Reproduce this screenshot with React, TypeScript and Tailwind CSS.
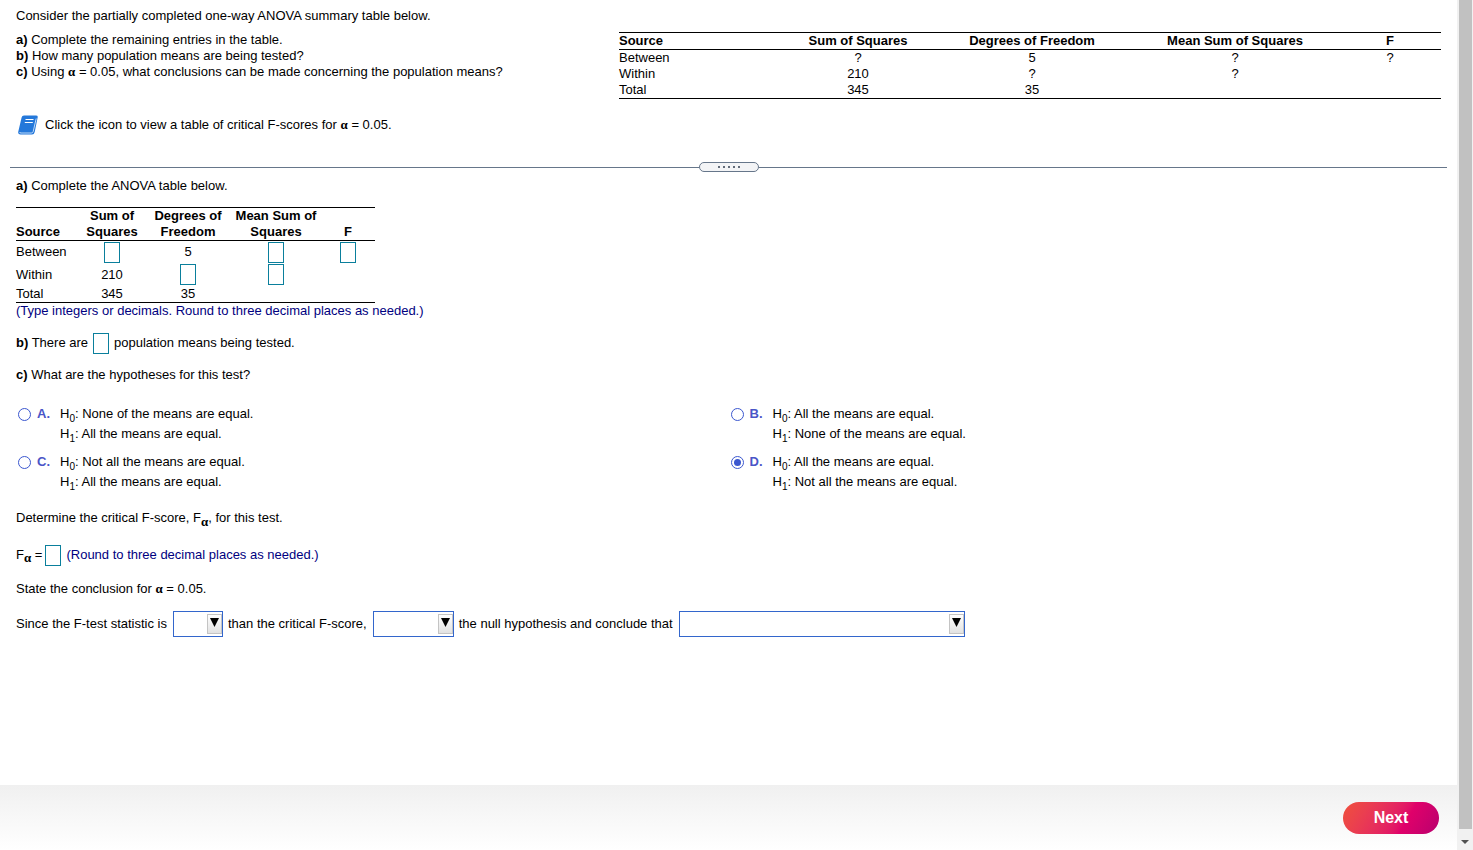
import { useState } from "react";
import type { ReactNode } from "react";

function Alpha() {
  return <span className="font-['Liberation_Serif',serif] text-[13px] leading-none font-bold">α</span>;
}

function Blank({ label }: { label: string }) {
  return (
    <input
      type="text"
      aria-label={label}
      className="inline-block h-[21px] w-4 border border-[#0a7f9c] bg-white text-center align-middle outline-none focus:bg-cyan-50"
    />
  );
}

function Dropdown({ label, options, className }: { label: string; options: string[]; className: string }) {
  return (
    <span className={`relative mr-[5px] ml-[6px] inline-flex h-[26px] ${className}`}>
      <select
        aria-label={label}
        defaultValue=""
        className="h-full w-full appearance-none border border-[#3366cc] bg-white pl-1 outline-none"
      >
        <option value=""></option>
        {options.map((option) => (
          <option key={option}>{option}</option>
        ))}
      </select>
      <span className="pointer-events-none absolute top-[3px] right-px flex h-5 w-[15px] justify-center border border-[#c4c4c4] bg-gradient-to-b from-white to-[#e2e2e2] pt-[3px]">
        <svg viewBox="0 0 9 9" className="h-[9px] w-[9px]" aria-hidden="true">
          <path d="M0 0h9L4.5 9z" fill="#000" />
        </svg>
      </span>
    </span>
  );
}

const summaryRows = [
  ["Between", "?", "5", "?", "?"],
  ["Within", "210", "?", "?", ""],
  ["Total", "345", "35", "", ""],
];

function SummaryTable() {
  return (
    <table className="mt-6 w-full table-fixed border-collapse self-start border-y border-black">
      <colgroup>
        <col className="w-[164px]" />
        <col className="w-[150px]" />
        <col className="w-[198px]" />
        <col className="w-[208px]" />
        <col className="w-[102px]" />
      </colgroup>
      <thead>
        <tr className="border-b border-black">
          <th className="p-0 text-left">Source</th>
          <th className="p-0">Sum of Squares</th>
          <th className="p-0">Degrees of Freedom</th>
          <th className="p-0">Mean Sum of Squares</th>
          <th className="p-0">F</th>
        </tr>
      </thead>
      <tbody>
        {summaryRows.map(([source, ...values]) => (
          <tr key={source}>
            <td className="p-0">{source}</td>
            {values.map((value, i) => (
              <td key={i} className="p-0 text-center">
                {value}
              </td>
            ))}
          </tr>
        ))}
      </tbody>
    </table>
  );
}

function AnswerTable() {
  return (
    <table className="w-[359px] table-fixed border-collapse border-y border-black text-center">
      <colgroup>
        <col className="w-[63px]" />
        <col className="w-[66px]" />
        <col className="w-[86px]" />
        <col className="w-[90px]" />
        <col className="w-[54px]" />
      </colgroup>
      <thead>
        <tr className="border-b border-black align-bottom">
          <th className="p-0 text-left">Source</th>
          <th className="p-0">Sum of<br />Squares</th>
          <th className="p-0">Degrees of<br />Freedom</th>
          <th className="p-0">Mean Sum of<br />Squares</th>
          <th className="p-0">F</th>
        </tr>
      </thead>
      <tbody>
        <tr className="h-[23px]">
          <td className="p-0 text-left">Between</td>
          <td className="p-0"><Blank label="Between sum of squares" /></td>
          <td className="p-0">5</td>
          <td className="p-0"><Blank label="Between mean sum of squares" /></td>
          <td className="p-0"><Blank label="F" /></td>
        </tr>
        <tr className="h-[22px]">
          <td className="p-0 text-left">Within</td>
          <td className="p-0">210</td>
          <td className="p-0"><Blank label="Within degrees of freedom" /></td>
          <td className="p-0"><Blank label="Within mean sum of squares" /></td>
          <td className="p-0"></td>
        </tr>
        <tr>
          <td className="p-0 text-left">Total</td>
          <td className="p-0">345</td>
          <td className="p-0">35</td>
          <td className="p-0"></td>
          <td className="p-0"></td>
        </tr>
      </tbody>
    </table>
  );
}

const choices = [
  { letter: "A", h0: "None of the means are equal.", h1: "All the means are equal." },
  { letter: "B", h0: "All the means are equal.", h1: "None of the means are equal." },
  { letter: "C", h0: "Not all the means are equal.", h1: "All the means are equal." },
  { letter: "D", h0: "All the means are equal.", h1: "Not all the means are equal." },
];

function Hypothesis({ index, children }: { index: number; children: ReactNode }) {
  return (
    <span className="block h-5 leading-5">
      H<sub className="-bottom-1 text-[10px]">{index}</sub>: {children}
    </span>
  );
}

function Choices() {
  const [selected, setSelected] = useState("D");

  return (
    <div className="mt-[21px] grid grid-cols-2 gap-y-2">
      {choices.map(({ letter, h0, h1 }) => (
        <label key={letter} className="flex items-start">
          <input
            type="radio"
            name="hypotheses"
            value={letter}
            checked={selected === letter}
            onChange={() => setSelected(letter)}
            className="mt-1 ml-0.5 h-[13px] w-[13px] shrink-0 appearance-none rounded-full border border-[#3b57cf] bg-white bg-clip-content p-0.5 checked:bg-[#3b57cf]"
          />
          <span className="ml-1.5 w-[23px] leading-5 font-bold text-[#4a55c7]">{letter}.</span>
          <span>
            <Hypothesis index={0}>{h0}</Hypothesis>
            <Hypothesis index={1}>{h1}</Hypothesis>
          </span>
        </label>
      ))}
    </div>
  );
}

function BookIcon() {
  return (
    <svg viewBox="0 0 20 20" className="h-5 w-5" aria-hidden="true">
      <path d="M6 .5h12q2 0 1.700 1.700L16.700 17Q16.200 19.500 14 19.500H2.500Q-.2 19.500 .2 17L3.600 2.500Q4 .5 6 .5z" fill="#2478da" />
      <path d="M1.500 17q.2 1 1.500 1h10.300q1.500 0 1.900-1.500L18.200 3.500" fill="none" stroke="#d3e5fa" strokeWidth=".9" />
      <path d="M7.500 4.500h8M6.800 7.500h8" stroke="#fff" strokeWidth="1.200" />
    </svg>
  );
}

function Divider() {
  return (
    <div className="mx-[10px] mt-[27px] flex items-center">
      <div className="h-px flex-1 bg-[#66768a]" />
      <button
        type="button"
        aria-label="Resize panels"
        className="flex h-[10px] w-[60px] items-center justify-center gap-[3px] rounded-full border border-[#66768a] bg-[#f3f4f6]"
      >
        {[0, 1, 2, 3, 4].map((dot) => (
          <span key={dot} className="h-0.5 w-0.5 bg-[#626c7a]" />
        ))}
      </button>
      <div className="h-px flex-1 bg-[#66768a]" />
    </div>
  );
}

export default function App() {
  return (
    <div className="flex min-h-screen bg-white font-['Liberation_Sans',Arial,sans-serif] text-[13px] leading-4 text-black">
      <div className="flex min-w-0 flex-1 flex-col">
        <main className="flex-1">
          <section className="grid grid-cols-[603fr_822fr] px-4 pt-2">
            <div>
              <p>Consider the partially completed one-way ANOVA summary table below.</p>
              <div className="mt-2">
                <p><b>a)</b> Complete the remaining entries in the table.</p>
                <p><b>b)</b> How many population means are being tested?</p>
                <p><b>c)</b> Using <Alpha /> = 0.05, what conclusions can be made concerning the population means?</p>
              </div>
              <div className="mt-[35px] flex items-center gap-[7px] pl-0.5">
                <button type="button" aria-label="View critical F-scores">
                  <BookIcon />
                </button>
                <p>Click the icon to view a table of critical F-scores for <Alpha /> = 0.05.</p>
              </div>
            </div>
            <SummaryTable />
          </section>

          <Divider />

          <section className="px-4 pt-[6px]">
            <p className="mb-[13px]"><b>a)</b> Complete the ANOVA table below.</p>
            <AnswerTable />
            <p className="text-[#000080]">(Type integers or decimals. Round to three decimal places as needed.)</p>
            <p className="mt-[14px] flex items-center">
              <span><b>b)</b> There are</span>
              <span className="mx-[5px] flex"><Blank label="Number of population means" /></span>
              <span>population means being tested.</span>
            </p>
            <p className="mt-[13px]"><b>c)</b> What are the hypotheses for this test?</p>

            <Choices />

            <p className="mt-4 leading-5">
              Determine the critical F-score, F<sub className="-bottom-1 text-[10px]"><Alpha /></sub>, for this test.
            </p>
            <div className="mt-[17px] flex items-center">
              <span>F<sub className="text-[10px]"><Alpha /></sub> =</span>
              <span className="mr-[5px] ml-[3px] flex"><Blank label="Critical F-score" /></span>
              <span className="text-[#000080]">(Round to three decimal places as needed.)</span>
            </div>
            <p className="mt-[15px]">State the conclusion for <Alpha /> = 0.05.</p>
            <div className="mt-[14px] flex items-center">
              <span>Since the F-test statistic is</span>
              <Dropdown label="Comparison" options={["greater", "less"]} className="w-[50px]" />
              <span>than the critical F-score,</span>
              <Dropdown label="Decision" options={["reject", "do not reject"]} className="w-[81px]" />
              <span>the null hypothesis and conclude that</span>
              <Dropdown
                label="Conclusion"
                options={["at least two population means are different", "the population means are equal"]}
                className="w-[286px]"
              />
            </div>
          </section>
        </main>

        <footer className="flex h-[65px] items-center justify-end bg-gradient-to-b from-[#f0f0f0] to-white px-[18px]">
          <button
            type="button"
            className="h-8 w-24 rounded-full bg-linear-120 from-[#f0503a] via-[#e0006a] via-65% to-[#b8006e] text-base font-bold text-white"
          >
            Next
          </button>
        </footer>
      </div>

      {/* scroll track */}
      <div className="flex w-4 flex-col items-center bg-[#f1f1f1]" aria-hidden="true">
        <div className="w-[13px] flex-1 bg-[#c1c1c1]" />
        <div className="flex h-[21px] items-center justify-center pt-1">
          <svg viewBox="0 0 8 4" className="h-1 w-2">
            <path d="M0 0h8L4 4z" fill="#505050" />
          </svg>
        </div>
      </div>
    </div>
  );
}
